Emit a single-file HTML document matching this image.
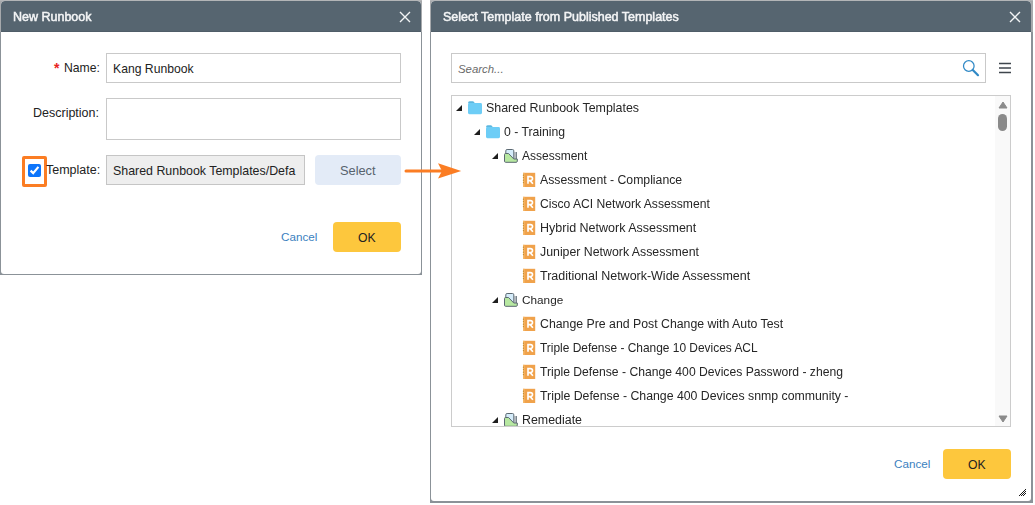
<!DOCTYPE html>
<html><head><meta charset="utf-8">
<style>
*{box-sizing:border-box;margin:0;padding:0}
html,body{width:1035px;height:505px;overflow:hidden;background:#fff;font-family:"Liberation Sans",sans-serif;color:#222}
.abs{position:absolute}
.dlg{position:absolute;background:linear-gradient(#b3b5b7 0 1px,#a6a9ac 1px 32px,#8b9298 32px)}
.inner{position:absolute;left:1px;top:1px;right:1px;bottom:1px;background:#fff;border-radius:4px 4px 3px 3px;overflow:hidden}
.hdr{position:absolute;left:0;top:0;right:0;height:31px;background:#566570;border-bottom:1px solid #4f5d68;border-radius:3px 3px 0 0}
.ttl{position:absolute;top:8px;will-change:transform;color:#f2f4f5;font-weight:normal;-webkit-text-stroke:0.5px #f4f5f6;font-size:12.5px;line-height:16px;white-space:nowrap}
.x{position:absolute;width:12px;height:12px}
.lbl{position:absolute;font-size:12.2px;line-height:16px;white-space:nowrap;color:#222;text-align:right}
.inp{position:absolute;border:1px solid #c9c9c9;background:#fff}
.txt{position:absolute;font-size:12.2px;line-height:16px;white-space:nowrap;color:#222}
.btn{position:absolute;border-radius:4px;text-align:center;white-space:nowrap}
.row{position:absolute;height:24px;white-space:nowrap}
.t{color:#262626}
.tri{position:absolute;width:0;height:0;border-style:solid;border-width:0 0 6px 6px;border-color:transparent transparent #262626 transparent}
</style></head><body>

<!-- LEFT DIALOG -->
<div class="dlg" style="left:0;top:0;width:422px;height:275px;"><div class="inner">
  <div class="hdr"></div>
  <div class="ttl" style="left:12px;top:8px">New Runbook</div>
  <svg class="x" style="left:398px;top:10px" viewBox="0 0 12 12"><path d="M1 1L11 11M11 1L1 11" stroke="#f2f4f5" stroke-width="1.4"/></svg>
</div></div>
<div class="lbl" style="left:54px;top:59.5px;color:#e8231e;font-size:14px;font-weight:bold">*</div>
<div class="lbl" style="left:64px;top:60px;">Name:</div>
<div class="inp" style="left:106px;top:53px;width:295px;height:30px;"></div>
<div class="txt" style="left:113px;top:61px;">Kang Runbook</div>
<div class="lbl" style="left:33px;top:105px;font-size:12.5px">Description:</div>
<div class="inp" style="left:106px;top:98px;width:295px;height:42px;"></div>

<!-- checkbox highlight -->
<div class="abs" style="left:22px;top:156px;width:24.5px;height:30.5px;border:3px solid #fb7d23;border-radius:2px"></div>
<div class="abs" style="left:28px;top:164px;width:13px;height:13px;background:#0d75fb;border-radius:2px"></div>
<svg class="abs" style="left:28px;top:164px" width="13" height="13" viewBox="0 0 13 13"><path d="M2.6 6.6L5.2 9.1L10.4 2.9" fill="none" stroke="#fff" stroke-width="2.2"/></svg>
<div class="lbl" style="left:46px;top:162px;font-size:12.5px">Template:</div>
<div class="inp" style="left:106px;top:155px;width:199px;height:30px;background:#eeeeee;border-color:#c5c5c5;overflow:hidden"></div>
<div class="txt" style="left:113px;top:163px;width:186px;overflow:hidden;font-size:12.4px">Shared Runbook Templates/Defa</div>
<div class="btn" style="left:315px;top:155px;width:86px;height:30px;background:#e3ebf7;"></div>
<div class="txt" style="left:340px;top:163px;color:#56626d;font-size:12.8px">Select</div>

<div class="txt" style="left:281px;top:229px;color:#3b7fc0;font-size:11.7px">Cancel</div>
<div class="btn" style="left:333px;top:222px;width:68px;height:30px;background:#fdc73d;"></div>
<div class="txt" style="left:358px;top:230px;font-size:12.2px">OK</div>

<!-- RIGHT DIALOG -->
<div class="dlg" style="left:430px;top:0;width:603px;height:503px;"><div class="inner" style="right:2px;bottom:2px">
  <div class="hdr"></div>
  <div class="ttl" style="left:12px;top:8px">Select Template from Published Templates</div>
  <svg class="x" style="left:578px;top:10px" viewBox="0 0 12 12"><path d="M1 1L11 11M11 1L1 11" stroke="#f2f4f5" stroke-width="1.4"/></svg>
</div></div>
<div class="inp" style="left:451px;top:53px;width:535px;height:30px;border-color:#c9c9c9"></div>
<div class="txt" style="left:458px;top:61px;font-style:italic;color:#6a6a6a;font-size:11.4px">Search...</div>
<svg class="abs" style="left:960px;top:58px" width="22" height="22" viewBox="0 0 22 22"><circle cx="8.8" cy="8" r="5.3" fill="none" stroke="#3089c6" stroke-width="1.25"/><path d="M12.8 12L18 17.2" stroke="#3089c6" stroke-width="2.2" stroke-linecap="round"/></svg>
<svg class="abs" style="left:998px;top:61px" width="14" height="14" viewBox="0 0 14 14"><path d="M1 2.4H13M1 7H13M1 11.4H13" stroke="#3f464d" stroke-width="1.5"/></svg>

<!-- tree box -->
<div class="abs" style="left:451px;top:95px;width:560px;height:332px;border:1px solid #cccccc;overflow:hidden;background:#fff">
  <div class="abs" style="left:543px;top:0;width:15px;height:330px;background:#f9f9f9"></div>
  <svg class="abs" style="left:545.5px;top:4.5px" width="10" height="8" viewBox="0 0 10 8"><path d="M5 1L9 7H1Z" fill="#8a8a8a" stroke="#8a8a8a" stroke-linejoin="round"/></svg>
  <div class="abs" style="left:546px;top:18px;width:9px;height:17px;background:#8a8a8a;border-radius:4.5px"></div>
  <svg class="abs" style="left:545.5px;top:319px" width="10" height="8" viewBox="0 0 10 8"><path d="M1 1H9L5 7Z" fill="#8a8a8a" stroke="#8a8a8a" stroke-linejoin="round"/></svg>
</div>

<div id="tree" class="abs" style="left:452px;top:96px;width:542px;height:330px;overflow:hidden;will-change:transform">
<svg class="abs" style="left:3px;top:7.9px" width="8" height="8" viewBox="0 0 8 8"><path d="M1 7H7V1Z" fill="#1e1e1e"/></svg>
<svg class="abs" style="left:16px;top:5px" width="14" height="14" viewBox="0 0 14 14"><path d="M0 2.2Q0 0.3 1.6 0.3H4.6Q5.6 0.3 6.4 1.6L6.8 2.2Z" fill="#5cb7df"/><rect x="0" y="2" width="14" height="11.2" rx="1.4" fill="#6dcdf6"/></svg>
<div class="t abs" style="left:34px;top:4px;font-size:12.43px;line-height:16px;white-space:nowrap">Shared Runbook Templates</div>
<svg class="abs" style="left:21px;top:31.9px" width="8" height="8" viewBox="0 0 8 8"><path d="M1 7H7V1Z" fill="#1e1e1e"/></svg>
<svg class="abs" style="left:34px;top:29px" width="14" height="14" viewBox="0 0 14 14"><path d="M0 2.2Q0 0.3 1.6 0.3H4.6Q5.6 0.3 6.4 1.6L6.8 2.2Z" fill="#5cb7df"/><rect x="0" y="2" width="14" height="11.2" rx="1.4" fill="#6dcdf6"/></svg>
<div class="t abs" style="left:52px;top:28px;font-size:12.22px;line-height:16px;white-space:nowrap">0 - Training</div>
<svg class="abs" style="left:39px;top:55.9px" width="8" height="8" viewBox="0 0 8 8"><path d="M1 7H7V1Z" fill="#1e1e1e"/></svg>
<svg class="abs" style="left:50px;top:51px" width="18" height="18" viewBox="0 0 18 18"><path d="M11.8 5H14.3V12H11.8Z" fill="#c9ced3"/><path d="M14.3 5V12" stroke="#5b6871" stroke-width="1"/><path d="M3.8 10.5V3.8Q3.8 2.5 5.1 2.5H10.5Q11.8 2.5 11.8 3.8V11.8" fill="#d5ecfa" stroke="#5b6871" stroke-width="1"/><path d="M2.5 7.6Q2.5 6.5 3.6 6.5H6.5L11.8 12H15.3V14.2Q15.3 15.3 14.2 15.3H3.6Q2.5 15.3 2.5 14.2Z" fill="#b7e8a1" stroke="#5b6871" stroke-width="1"/></svg>
<div class="t abs" style="left:70px;top:52px;font-size:12.00px;line-height:16px;white-space:nowrap">Assessment</div>
<svg class="abs" style="left:67px;top:74px" width="20" height="20" viewBox="0 0 20 20"><rect x="4" y="2.8" width="12.2" height="14.2" fill="#f0a24b"/><rect x="4" y="2.8" width="1.6" height="14.2" fill="#f5b767"/><circle cx="4.4" cy="5.2" r="0.6" fill="#b8862c"/><circle cx="4.4" cy="7.6" r="0.6" fill="#b8862c"/><circle cx="4.4" cy="10.2" r="0.6" fill="#b8862c"/><circle cx="4.4" cy="12.6" r="0.6" fill="#b8862c"/><path d="M9 13.8V6.6H11.4Q13.5 6.6 13.5 8.6Q13.5 10.6 11.4 10.6H9M11.2 10.6L13.9 13.8" fill="none" stroke="#fff" stroke-width="1.65"/></svg>
<div class="t abs" style="left:88px;top:76px;font-size:12.24px;line-height:16px;white-space:nowrap">Assessment - Compliance</div>
<svg class="abs" style="left:67px;top:98px" width="20" height="20" viewBox="0 0 20 20"><rect x="4" y="2.8" width="12.2" height="14.2" fill="#f0a24b"/><rect x="4" y="2.8" width="1.6" height="14.2" fill="#f5b767"/><circle cx="4.4" cy="5.2" r="0.6" fill="#b8862c"/><circle cx="4.4" cy="7.6" r="0.6" fill="#b8862c"/><circle cx="4.4" cy="10.2" r="0.6" fill="#b8862c"/><circle cx="4.4" cy="12.6" r="0.6" fill="#b8862c"/><path d="M9 13.8V6.6H11.4Q13.5 6.6 13.5 8.6Q13.5 10.6 11.4 10.6H9M11.2 10.6L13.9 13.8" fill="none" stroke="#fff" stroke-width="1.65"/></svg>
<div class="t abs" style="left:88px;top:100px;font-size:12.13px;line-height:16px;white-space:nowrap">Cisco ACI Network Assessment</div>
<svg class="abs" style="left:67px;top:122px" width="20" height="20" viewBox="0 0 20 20"><rect x="4" y="2.8" width="12.2" height="14.2" fill="#f0a24b"/><rect x="4" y="2.8" width="1.6" height="14.2" fill="#f5b767"/><circle cx="4.4" cy="5.2" r="0.6" fill="#b8862c"/><circle cx="4.4" cy="7.6" r="0.6" fill="#b8862c"/><circle cx="4.4" cy="10.2" r="0.6" fill="#b8862c"/><circle cx="4.4" cy="12.6" r="0.6" fill="#b8862c"/><path d="M9 13.8V6.6H11.4Q13.5 6.6 13.5 8.6Q13.5 10.6 11.4 10.6H9M11.2 10.6L13.9 13.8" fill="none" stroke="#fff" stroke-width="1.65"/></svg>
<div class="t abs" style="left:88px;top:124px;font-size:12.50px;line-height:16px;white-space:nowrap">Hybrid Network Assessment</div>
<svg class="abs" style="left:67px;top:146px" width="20" height="20" viewBox="0 0 20 20"><rect x="4" y="2.8" width="12.2" height="14.2" fill="#f0a24b"/><rect x="4" y="2.8" width="1.6" height="14.2" fill="#f5b767"/><circle cx="4.4" cy="5.2" r="0.6" fill="#b8862c"/><circle cx="4.4" cy="7.6" r="0.6" fill="#b8862c"/><circle cx="4.4" cy="10.2" r="0.6" fill="#b8862c"/><circle cx="4.4" cy="12.6" r="0.6" fill="#b8862c"/><path d="M9 13.8V6.6H11.4Q13.5 6.6 13.5 8.6Q13.5 10.6 11.4 10.6H9M11.2 10.6L13.9 13.8" fill="none" stroke="#fff" stroke-width="1.65"/></svg>
<div class="t abs" style="left:88px;top:148px;font-size:12.33px;line-height:16px;white-space:nowrap">Juniper Network Assessment</div>
<svg class="abs" style="left:67px;top:170px" width="20" height="20" viewBox="0 0 20 20"><rect x="4" y="2.8" width="12.2" height="14.2" fill="#f0a24b"/><rect x="4" y="2.8" width="1.6" height="14.2" fill="#f5b767"/><circle cx="4.4" cy="5.2" r="0.6" fill="#b8862c"/><circle cx="4.4" cy="7.6" r="0.6" fill="#b8862c"/><circle cx="4.4" cy="10.2" r="0.6" fill="#b8862c"/><circle cx="4.4" cy="12.6" r="0.6" fill="#b8862c"/><path d="M9 13.8V6.6H11.4Q13.5 6.6 13.5 8.6Q13.5 10.6 11.4 10.6H9M11.2 10.6L13.9 13.8" fill="none" stroke="#fff" stroke-width="1.65"/></svg>
<div class="t abs" style="left:88px;top:172px;font-size:12.47px;line-height:16px;white-space:nowrap">Traditional Network-Wide Assessment</div>
<svg class="abs" style="left:39px;top:199.9px" width="8" height="8" viewBox="0 0 8 8"><path d="M1 7H7V1Z" fill="#1e1e1e"/></svg>
<svg class="abs" style="left:50px;top:195px" width="18" height="18" viewBox="0 0 18 18"><path d="M11.8 5H14.3V12H11.8Z" fill="#c9ced3"/><path d="M14.3 5V12" stroke="#5b6871" stroke-width="1"/><path d="M3.8 10.5V3.8Q3.8 2.5 5.1 2.5H10.5Q11.8 2.5 11.8 3.8V11.8" fill="#d5ecfa" stroke="#5b6871" stroke-width="1"/><path d="M2.5 7.6Q2.5 6.5 3.6 6.5H6.5L11.8 12H15.3V14.2Q15.3 15.3 14.2 15.3H3.6Q2.5 15.3 2.5 14.2Z" fill="#b7e8a1" stroke="#5b6871" stroke-width="1"/></svg>
<div class="t abs" style="left:70px;top:196px;font-size:11.77px;line-height:16px;white-space:nowrap">Change</div>
<svg class="abs" style="left:67px;top:218px" width="20" height="20" viewBox="0 0 20 20"><rect x="4" y="2.8" width="12.2" height="14.2" fill="#f0a24b"/><rect x="4" y="2.8" width="1.6" height="14.2" fill="#f5b767"/><circle cx="4.4" cy="5.2" r="0.6" fill="#b8862c"/><circle cx="4.4" cy="7.6" r="0.6" fill="#b8862c"/><circle cx="4.4" cy="10.2" r="0.6" fill="#b8862c"/><circle cx="4.4" cy="12.6" r="0.6" fill="#b8862c"/><path d="M9 13.8V6.6H11.4Q13.5 6.6 13.5 8.6Q13.5 10.6 11.4 10.6H9M11.2 10.6L13.9 13.8" fill="none" stroke="#fff" stroke-width="1.65"/></svg>
<div class="t abs" style="left:88px;top:220px;font-size:12.30px;line-height:16px;white-space:nowrap">Change Pre and Post Change with Auto Test</div>
<svg class="abs" style="left:67px;top:242px" width="20" height="20" viewBox="0 0 20 20"><rect x="4" y="2.8" width="12.2" height="14.2" fill="#f0a24b"/><rect x="4" y="2.8" width="1.6" height="14.2" fill="#f5b767"/><circle cx="4.4" cy="5.2" r="0.6" fill="#b8862c"/><circle cx="4.4" cy="7.6" r="0.6" fill="#b8862c"/><circle cx="4.4" cy="10.2" r="0.6" fill="#b8862c"/><circle cx="4.4" cy="12.6" r="0.6" fill="#b8862c"/><path d="M9 13.8V6.6H11.4Q13.5 6.6 13.5 8.6Q13.5 10.6 11.4 10.6H9M11.2 10.6L13.9 13.8" fill="none" stroke="#fff" stroke-width="1.65"/></svg>
<div class="t abs" style="left:88px;top:244px;font-size:11.93px;line-height:16px;white-space:nowrap">Triple Defense - Change 10 Devices ACL</div>
<svg class="abs" style="left:67px;top:266px" width="20" height="20" viewBox="0 0 20 20"><rect x="4" y="2.8" width="12.2" height="14.2" fill="#f0a24b"/><rect x="4" y="2.8" width="1.6" height="14.2" fill="#f5b767"/><circle cx="4.4" cy="5.2" r="0.6" fill="#b8862c"/><circle cx="4.4" cy="7.6" r="0.6" fill="#b8862c"/><circle cx="4.4" cy="10.2" r="0.6" fill="#b8862c"/><circle cx="4.4" cy="12.6" r="0.6" fill="#b8862c"/><path d="M9 13.8V6.6H11.4Q13.5 6.6 13.5 8.6Q13.5 10.6 11.4 10.6H9M11.2 10.6L13.9 13.8" fill="none" stroke="#fff" stroke-width="1.65"/></svg>
<div class="t abs" style="left:88px;top:268px;font-size:12.16px;line-height:16px;white-space:nowrap">Triple Defense - Change 400 Devices Password - zheng</div>
<svg class="abs" style="left:67px;top:290px" width="20" height="20" viewBox="0 0 20 20"><rect x="4" y="2.8" width="12.2" height="14.2" fill="#f0a24b"/><rect x="4" y="2.8" width="1.6" height="14.2" fill="#f5b767"/><circle cx="4.4" cy="5.2" r="0.6" fill="#b8862c"/><circle cx="4.4" cy="7.6" r="0.6" fill="#b8862c"/><circle cx="4.4" cy="10.2" r="0.6" fill="#b8862c"/><circle cx="4.4" cy="12.6" r="0.6" fill="#b8862c"/><path d="M9 13.8V6.6H11.4Q13.5 6.6 13.5 8.6Q13.5 10.6 11.4 10.6H9M11.2 10.6L13.9 13.8" fill="none" stroke="#fff" stroke-width="1.65"/></svg>
<div class="t abs" style="left:88px;top:292px;font-size:12.31px;line-height:16px;white-space:nowrap">Triple Defense - Change 400 Devices snmp community -</div>
<svg class="abs" style="left:39px;top:319.9px" width="8" height="8" viewBox="0 0 8 8"><path d="M1 7H7V1Z" fill="#1e1e1e"/></svg>
<svg class="abs" style="left:50px;top:315px" width="18" height="18" viewBox="0 0 18 18"><path d="M11.8 5H14.3V12H11.8Z" fill="#c9ced3"/><path d="M14.3 5V12" stroke="#5b6871" stroke-width="1"/><path d="M3.8 10.5V3.8Q3.8 2.5 5.1 2.5H10.5Q11.8 2.5 11.8 3.8V11.8" fill="#d5ecfa" stroke="#5b6871" stroke-width="1"/><path d="M2.5 7.6Q2.5 6.5 3.6 6.5H6.5L11.8 12H15.3V14.2Q15.3 15.3 14.2 15.3H3.6Q2.5 15.3 2.5 14.2Z" fill="#b7e8a1" stroke="#5b6871" stroke-width="1"/></svg>
<div class="t abs" style="left:70px;top:316px;font-size:12.41px;line-height:16px;white-space:nowrap">Remediate</div>
</div>

<!-- arrow -->
<svg class="abs" style="left:400px;top:160px" width="66" height="22" viewBox="0 0 66 22"><path d="M6 11H42" stroke="#fb7d23" stroke-width="3" stroke-linecap="round"/><path d="M61.2 11L38 3.3L42 11L38 18.5Z" fill="#fb7d23"/></svg>

<div class="txt" style="left:894px;top:456px;color:#3b7fc0;font-size:11.7px">Cancel</div>
<div class="btn" style="left:943px;top:449px;width:68px;height:30px;background:#fdc73d;"></div>
<div class="txt" style="left:968px;top:457px;font-size:12.2px">OK</div>
<svg class="abs" style="left:1014px;top:484px" width="16" height="16" viewBox="0 0 16 16" shape-rendering="crispEdges" fill="#1a1a1a"><rect x="11" y="5" width="1" height="1"/><rect x="10" y="6" width="1" height="1"/><rect x="9" y="7" width="1" height="1"/><rect x="11" y="7" width="1" height="1"/><rect x="8" y="8" width="1" height="1"/><rect x="10" y="8" width="1" height="1"/><rect x="7" y="9" width="1" height="1"/><rect x="9" y="9" width="1" height="1"/><rect x="11" y="9" width="1" height="1"/><rect x="6" y="10" width="1" height="1"/><rect x="8" y="10" width="1" height="1"/><rect x="10" y="10" width="1" height="1"/><rect x="5" y="11" width="1" height="1"/><rect x="7" y="11" width="1" height="1"/><rect x="9" y="11" width="1" height="1"/></svg>
</body></html>
